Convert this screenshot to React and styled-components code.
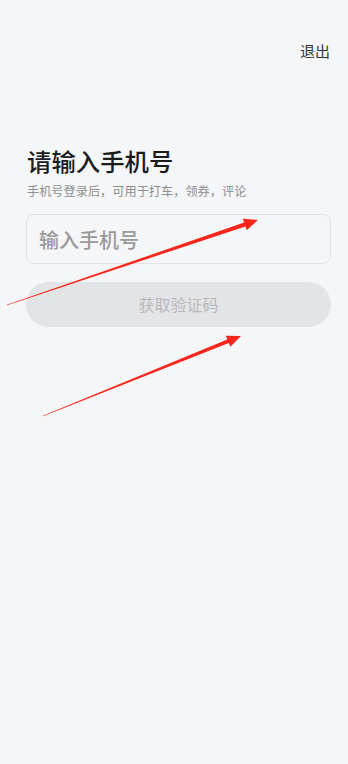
import React from "react";
import styled, { createGlobalStyle } from "styled-components";

const FONT = `"Noto Sans CJK SC", "Noto Sans", sans-serif`;

const GlobalStyle = createGlobalStyle`
  html, body {
    margin: 0;
    padding: 0;
    background: #f5f6f8;
    font-family: ${FONT};
  }
  * {
    box-sizing: border-box;
  }
`;

// annotation arrows drawn over the screenshot
const arrows = [
  { from: [7, 305], to: [258, 220] },
  { from: [43, 416], to: [241, 336] },
];

function arrowPoints({ from, to }) {
  const [tx, ty] = from;
  const [hx, hy] = to;
  const len = Math.hypot(hx - tx, hy - ty);
  const dx = (hx - tx) / len;
  const dy = (hy - ty) / len;
  const nx = -dy;
  const ny = dx;
  const bx = hx - dx * 14;
  const by = hy - dy * 14;
  const p = (x, y) => `${x.toFixed(1)},${y.toFixed(1)}`;
  return [
    p(tx + nx * 0.3, ty + ny * 0.3),
    p(bx + nx * 2, by + ny * 2),
    p(bx + nx * 6, by + ny * 6),
    p(hx, hy),
    p(bx - nx * 6, by - ny * 6),
    p(bx - nx * 2, by - ny * 2),
    p(tx - nx * 0.3, ty - ny * 0.3),
  ].join(" ");
}

function App() {
  return (
    <>
      <GlobalStyle />
      <Page>
        <TopBar>
          <ExitButton>退出</ExitButton>
        </TopBar>
        <Title>请输入手机号</Title>
        <Subtitle>手机号登录后，可用于打车，领券，评论</Subtitle>
        <PhoneInput type="tel" placeholder="输入手机号" />
        <CodeButton disabled>获取验证码</CodeButton>
        <Annotations width="348" height="764" viewBox="0 0 348 764">
          {arrows.map((a, i) => (
            <polygon key={i} points={arrowPoints(a)} fill="#f7261c" />
          ))}
        </Annotations>
      </Page>
    </>
  );
}

const Page = styled.main`
  position: relative;
  min-height: 100vh;
  display: flex;
  flex-direction: column;
  padding: 41px 17px 0 26px;
  background: #f5f6f8;
`;

const TopBar = styled.header`
  display: flex;
  justify-content: flex-end;
  height: 20px;
`;

const ExitButton = styled.span`
  font-size: 15px;
  line-height: 20px;
  color: #333333;
  margin-right: 1px;
`;

const Title = styled.h1`
  margin: 83px 0 0 1px;
  font-size: 24.4px;
  line-height: 33px;
  font-weight: 500;
  color: #1c1c1c;
`;

const Subtitle = styled.p`
  margin: 5px 0 0 1px;
  font-size: 12.2px;
  line-height: 18px;
  color: #8f8f8f;
`;

const PhoneInput = styled.input`
  margin-top: 14px;
  width: 100%;
  height: 50px;
  padding: 0 12px;
  border: 1px solid #e2e3e6;
  border-radius: 8px;
  background: #f5f6f8;
  font-family: ${FONT};
  font-size: 20px;
  font-weight: 500;
  color: #333;
  outline: none;

  &::placeholder {
    color: #9a9a9a;
  }
`;

const CodeButton = styled.button`
  margin-top: 18px;
  width: 100%;
  height: 45px;
  padding: 0 0 2px;
  border: none;
  border-radius: 23px;
  background: #e3e4e6;
  font-family: ${FONT};
  font-size: 16px;
  color: #b9b9bb;
`;

const Annotations = styled.svg`
  position: absolute;
  top: 0;
  left: 0;
  pointer-events: none;
`;

export default App;
